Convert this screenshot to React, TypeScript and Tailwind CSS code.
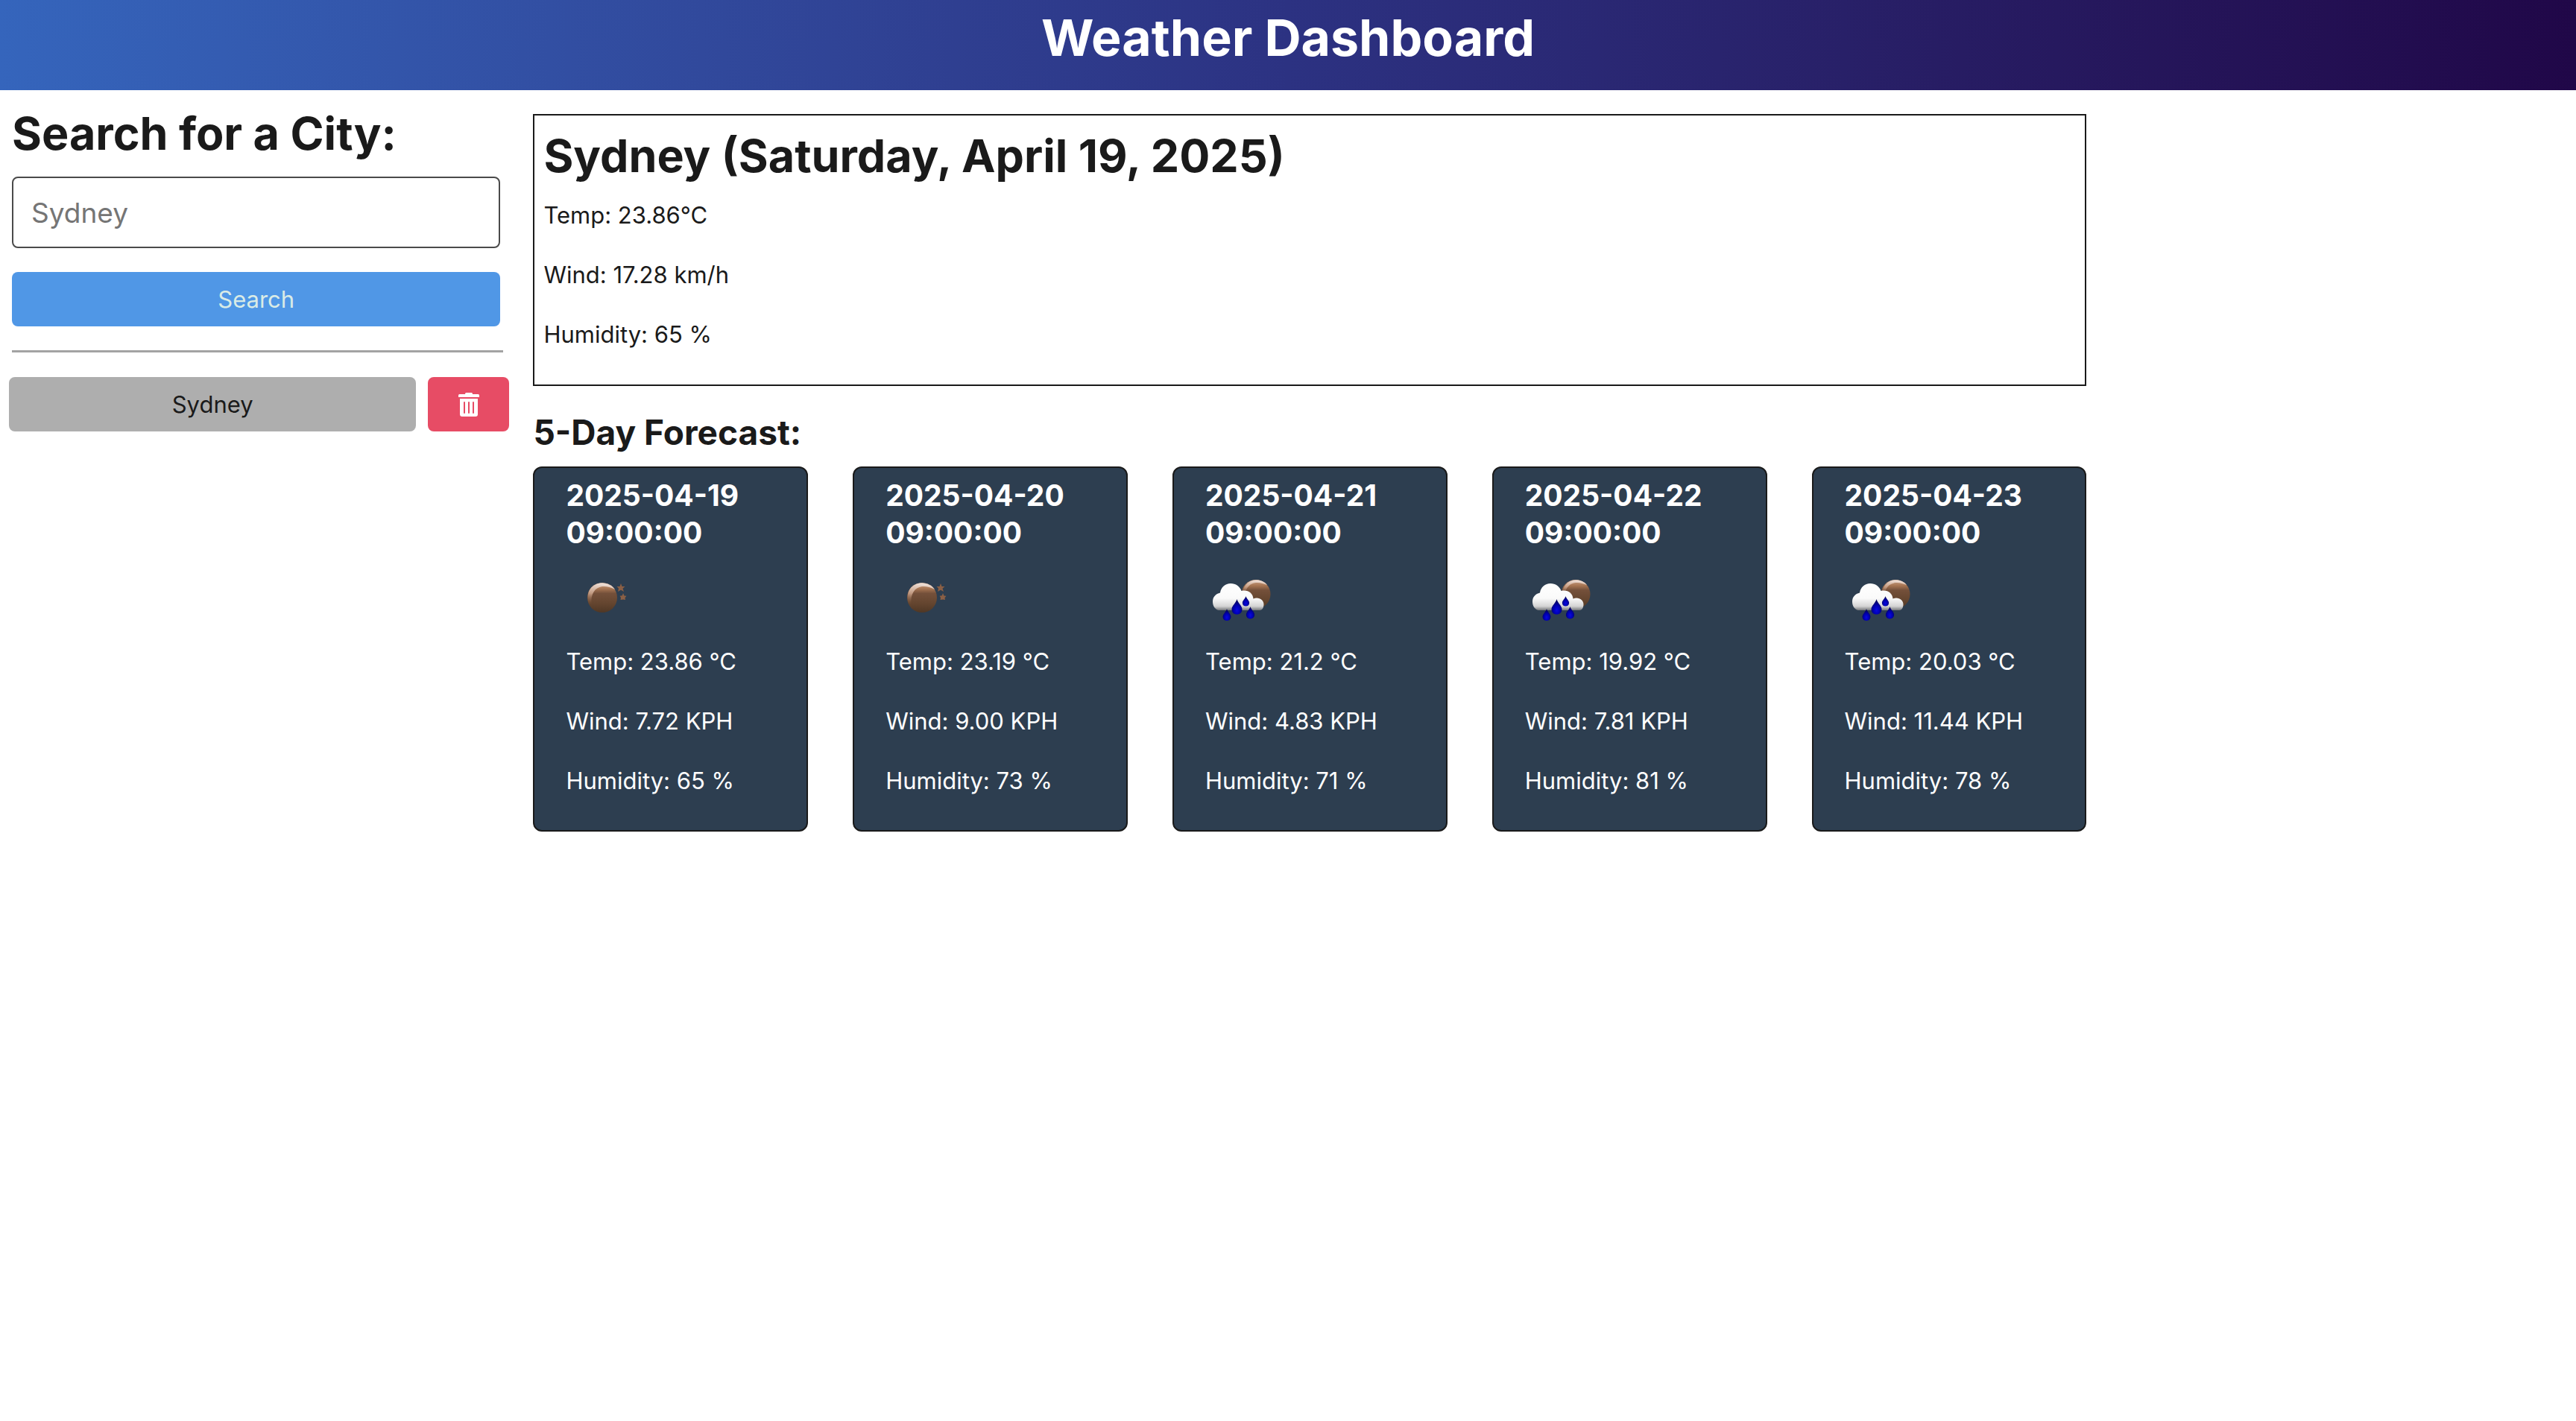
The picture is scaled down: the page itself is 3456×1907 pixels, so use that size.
import React from "react";

type Forecast = {
  date: string;
  icon: "clear" | "rain";
  temp: string;
  wind: string;
  humidity: string;
};

const forecast: Forecast[] = [
  { date: "2025-04-19 09:00:00", icon: "clear", temp: "23.86", wind: "7.72", humidity: "65" },
  { date: "2025-04-20 09:00:00", icon: "clear", temp: "23.19", wind: "9.00", humidity: "73" },
  { date: "2025-04-21 09:00:00", icon: "rain", temp: "21.2", wind: "4.83", humidity: "71" },
  { date: "2025-04-22 09:00:00", icon: "rain", temp: "19.92", wind: "7.81", humidity: "81" },
  { date: "2025-04-23 09:00:00", icon: "rain", temp: "20.03", wind: "11.44", humidity: "78" },
];

function IconGradients({ id }: { id: string }) {
  return (
    <defs>
      <linearGradient id={`${id}-body`} x1="0" y1="0" x2="0" y2="1">
        <stop offset="0" stopColor="#c9a48c" />
        <stop offset="0.2" stopColor="#a87653" />
        <stop offset="0.36" stopColor="#74503a" />
        <stop offset="0.7" stopColor="#64452f" />
        <stop offset="1" stopColor="#4f3725" />
      </linearGradient>
      <linearGradient id={`${id}-shine`} x1="0.4" y1="0" x2="0.3" y2="1">
        <stop offset="0" stopColor="#f0e2da" />
        <stop offset="0.5" stopColor="#c79f86" stopOpacity="0.9" />
        <stop offset="1" stopColor="#7a5036" stopOpacity="0" />
      </linearGradient>
      <linearGradient id={`${id}-cloud`} x1="0" y1="0" x2="0" y2="1">
        <stop offset="0" stopColor="#ffffff" />
        <stop offset="0.55" stopColor="#fafafa" />
        <stop offset="0.85" stopColor="#d4d4d4" />
        <stop offset="1" stopColor="#77797c" />
      </linearGradient>
      <radialGradient id={`${id}-drop`} cx="0.5" cy="0.72" r="0.6">
        <stop offset="0" stopColor="#0808e0" />
        <stop offset="0.45" stopColor="#0000b8" />
        <stop offset="1" stopColor="#00005c" />
      </radialGradient>
    </defs>
  );
}

function ClearNightIcon({ id }: { id: string }) {
  return (
    <svg viewBox="-1 1 100 100" className="size-[100px]" role="img" aria-label="Clear night">
      <IconGradients id={id} />
      <circle cx="48" cy="51" r="20" fill={`url(#${id}-body)`} />
      <path
        d="M29.500 58 C25.500 42 35 31.500 48 31.500 C55 31.500 62 35 65 40 C59 36.500 53 35.500 48 36 C38 37.500 32 46 33.500 61 Z"
        fill={`url(#${id}-shine)`}
      />
      <path
        d="M73 32 L74.500 36 L78.500 36 L75.500 38.800 L77 43 L73 40.800 L69 43 L70 38.800 L67.500 36 L71.500 36 Z M76 45 L77.500 48.500 L80.500 48.800 L78.500 51.200 L79 54 L76 53.500 L72.500 54 L73 51 L71.500 48.800 L74.800 48.300 Z"
        fill="#8a5f45"
      />
    </svg>
  );
}

function Drop({ x, y, scale, id }: { x: number; y: number; scale: number; id: string }) {
  return (
    <path
      transform={`translate(${x} ${y}) scale(${scale})`}
      d="M0 0 C1 5 7 9 7 13.500 C7 18 4 20.500 0 20.500 C-4 20.500 -7 18 -7 13.500 C-7 9 -1 5 0 0 Z"
      fill={`url(#${id}-drop)`}
    />
  );
}

function RainNightIcon({ id }: { id: string }) {
  return (
    <svg viewBox="0 2 100 100" className="size-[100px]" role="img" aria-label="Rainy night">
      <IconGradients id={id} />
      <circle cx="68" cy="47.500" r="19.500" fill={`url(#${id}-body)`} />
      <path
        d="M50 44 C53 33 60 28.500 68 28.500 C75 28.500 80 31 83 35 C78 33 73 31.500 68 32 C60 33 55 38 53 48 Z"
        fill={`url(#${id}-shine)`}
      />
      <path
        d="M18 69 C13 68 10 63 10 57.500 C10 51 14 47 20 45.500 C21 38 27 33 34 33 C41 33 46.500 37 48.500 43 C57 41 64 46 64.500 53.500 C72 50.500 78.500 55.500 78.500 61 C78.500 66 76 69 73 69 Z"
        fill={`url(#${id}-cloud)`}
      />
      <Drop id={id} x={42.5} y={54} scale={1} />
      <Drop id={id} x={54.5} y={50} scale={0.66} />
      <Drop id={id} x={29} y={67} scale={0.78} />
      <Drop id={id} x={60.5} y={64} scale={0.8} />
    </svg>
  );
}

function TrashIcon() {
  return (
    <svg viewBox="0 0 28 32" className="h-8 w-7" fill="currentColor" aria-hidden="true">
      <path d="M9 1.500 Q9 0 10.500 0 H17.500 Q19 0 19 1.500 V2 H26.500 Q28 2 28 3.500 V6 H0 V3.500 Q0 2 1.500 2 H9 Z" />
      <path
        fillRule="evenodd"
        d="M2 8 H26 V29 Q26 32 23 32 H5 Q2 32 2 29 Z M7 13 V27 Q7 28 8 28 Q9 28 9 27 V13 Q9 12 8 12 Q7 12 7 13 Z M13 13 V27 Q13 28 14 28 Q15 28 15 27 V13 Q15 12 14 12 Q13 12 13 13 Z M19 13 V27 Q19 28 20 28 Q21 28 21 27 V13 Q21 12 20 12 Q19 12 19 13 Z"
      />
    </svg>
  );
}

function ForecastCard({ day, id }: { day: Forecast; id: string }) {
  return (
    <article className="rounded-xl border-2 border-[#1a1a1a] bg-[#2d3e50] px-[42px] pt-3 pb-[10px] text-white">
      <h5 className="mb-3 text-[39px] leading-[50px] font-bold">{day.date}</h5>
      <div className="mb-3 flex h-[100px] items-center">
        {day.icon === "clear" ? <ClearNightIcon id={id} /> : <RainNightIcon id={id} />}
      </div>
      <p className="mb-8">Temp: {day.temp} °C</p>
      <p className="mb-8">Wind: {day.wind} KPH</p>
      <p className="mb-8">Humidity: {day.humidity} %</p>
    </article>
  );
}

export default function App() {
  return (
    <div className="min-h-screen bg-white font-['Inter',sans-serif] text-[31px] leading-[48px] text-[#1a1a1a]">
      <header className="h-[121px] bg-linear-to-r from-[#3565bc] via-[#2c3282] to-[#200748] pt-1 text-center text-white">
        <h1 className="text-[68px] leading-[92px] font-bold">Weather Dashboard</h1>
      </header>
      <div className="flex items-start pt-8">
        <aside className="w-[20.7%] shrink-0 pr-8 pl-3">
          <form className="pr-3 pl-1" onSubmit={(e) => e.preventDefault()}>
            <label htmlFor="city" className="mb-4 -mt-4 block text-[61px] leading-[84px] font-bold">
              Search for a City:
            </label>
            <input
              id="city"
              type="text"
              placeholder="Sydney"
              className="block h-24 w-full rounded-lg border-2 border-[#4a4a4a] px-6 text-[37px] placeholder:text-[#757575] placeholder:opacity-100"
            />
            <button
              type="submit"
              className="mt-8 block h-[73px] w-full rounded-lg bg-[#5097e6] text-[#d9ebe6]"
            >
              Search
            </button>
          </form>
          <hr className="mt-8 mr-2 mb-[33px] ml-1 border-t-[3px] border-[#a3a3a3]" />
          <div className="flex gap-4">
            <button type="button" className="h-[73px] flex-1 rounded-lg bg-[#aeaeae]">
              Sydney
            </button>
            <button
              type="button"
              aria-label="Delete Sydney"
              className="flex h-[73px] w-[109px] items-center justify-center rounded-lg bg-[#e74c65] text-white"
            >
              <TrashIcon />
            </button>
          </div>
        </aside>
        <main className="w-[60.3%]">
          <section className="border-2 border-[#1a1a1a] px-3 pt-[14px] pb-[11px]">
            <h2 className="mb-4 text-[61px] leading-[80px] font-bold">
              Sydney (Saturday, April 19, 2025)
            </h2>
            <p className="mb-8">Temp: 23.86°C</p>
            <p className="mb-8">Wind: 17.28 km/h</p>
            <p className="mb-8">Humidity: 65 %</p>
          </section>
          <section className="mt-8">
            <h4 className="mb-4 text-[46px] leading-[60px] font-bold">5-Day Forecast:</h4>
            <div className="grid grid-cols-5 gap-[60px]">
              {forecast.map((day, i) => (
                <ForecastCard key={day.date} day={day} id={`day${i}`} />
              ))}
            </div>
          </section>
        </main>
      </div>
    </div>
  );
}
